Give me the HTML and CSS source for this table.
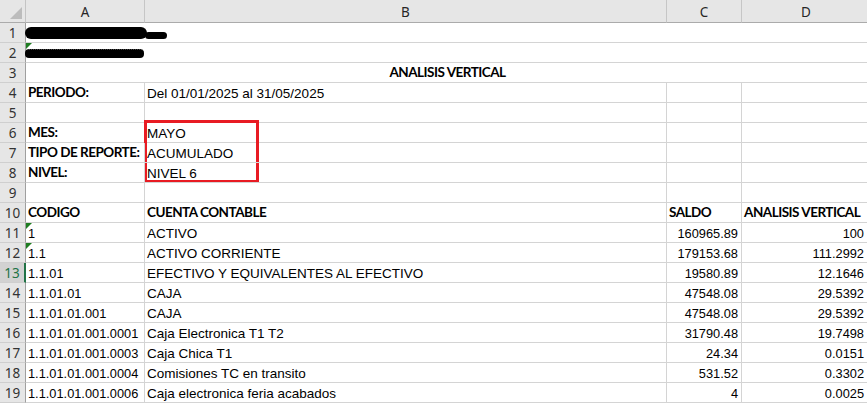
FILE: index.html
```html
<!DOCTYPE html>
<html lang="es">
<head>
<meta charset="utf-8">
<title>Analisis Vertical</title>
<link rel="stylesheet" href="styles.css">
</head>
<body>
<div class="sheet">
  <div class="corner"><span class="corner-tri"></span></div>
  <div class="ch">A</div>
  <div class="ch">B</div>
  <div class="ch">C</div>
  <div class="ch">D</div>

  <div class="rh">1</div>
  <div class="c span4 open"><span class="scrib scrib1"></span><span class="scrib scrib1t"></span></div>

  <div class="rh">2</div>
  <div class="c span4 open flag"><span class="scrib scrib2"></span></div>

  <div class="rh">3</div>
  <div class="c span4 b center">ANALISIS VERTICAL</div>

  <div class="rh">4</div>
  <div class="c b">PERIODO:</div>
  <div class="c">Del 01/01/2025 al 31/05/2025</div>
  <div class="c"></div>
  <div class="c"></div>

  <div class="rh">5</div>
  <div class="c"></div><div class="c"></div><div class="c"></div><div class="c"></div>

  <div class="rh">6</div>
  <div class="c b">MES:</div>
  <div class="c open">MAYO<span class="redbox"></span></div>
  <div class="c"></div><div class="c"></div>

  <div class="rh">7</div>
  <div class="c b">TIPO DE REPORTE:</div>
  <div class="c">ACUMULADO</div>
  <div class="c"></div><div class="c"></div>

  <div class="rh">8</div>
  <div class="c b">NIVEL:</div>
  <div class="c">NIVEL 6</div>
  <div class="c"></div><div class="c"></div>

  <div class="rh">9</div>
  <div class="c"></div><div class="c"></div><div class="c"></div><div class="c"></div>

  <div class="rh">10</div>
  <div class="c b">CODIGO</div>
  <div class="c b">CUENTA CONTABLE</div>
  <div class="c b">SALDO</div>
  <div class="c b">ANALISIS VERTICAL</div>

  <div class="rh">11</div>
  <div class="c code flag">1</div>
  <div class="c">ACTIVO</div>
  <div class="c num">160965.89</div>
  <div class="c num nd">100</div>

  <div class="rh">12</div>
  <div class="c code flag">1.1</div>
  <div class="c">ACTIVO CORRIENTE</div>
  <div class="c num">179153.68</div>
  <div class="c num nd">111.2992</div>

  <div class="rh rh-sel">13</div>
  <div class="c code">1.1.01</div>
  <div class="c">EFECTIVO Y EQUIVALENTES AL EFECTIVO</div>
  <div class="c num">19580.89</div>
  <div class="c num nd">12.1646</div>

  <div class="rh">14</div>
  <div class="c code">1.1.01.01</div>
  <div class="c">CAJA</div>
  <div class="c num">47548.08</div>
  <div class="c num nd">29.5392</div>

  <div class="rh">15</div>
  <div class="c code">1.1.01.01.001</div>
  <div class="c">CAJA</div>
  <div class="c num">47548.08</div>
  <div class="c num nd">29.5392</div>

  <div class="rh">16</div>
  <div class="c code">1.1.01.01.001.0001</div>
  <div class="c">Caja Electronica T1 T2</div>
  <div class="c num">31790.48</div>
  <div class="c num nd">19.7498</div>

  <div class="rh">17</div>
  <div class="c code">1.1.01.01.001.0003</div>
  <div class="c">Caja Chica T1</div>
  <div class="c num">24.34</div>
  <div class="c num nd">0.0151</div>

  <div class="rh">18</div>
  <div class="c code">1.1.01.01.001.0004</div>
  <div class="c">Comisiones TC en transito</div>
  <div class="c num">531.52</div>
  <div class="c num nd">0.3302</div>

  <div class="rh">19</div>
  <div class="c code">1.1.01.01.001.0006</div>
  <div class="c">Caja electronica feria acabados</div>
  <div class="c num">4</div>
  <div class="c num nd">0.0025</div>
</div>
</body>
</html>
```
FILE: styles.css
```css
html, body {
  margin: 0;
  padding: 0;
  background: #ffffff;
  overflow: hidden;
}

.sheet {
  display: grid;
  grid-template-columns: 26px 119px 522px 75px 129px;
  grid-template-rows: 23px repeat(19, 20px);
  width: 871px;
  font-family: "Liberation Sans", Arial, sans-serif;
  font-size: 13.5px;
  color: #000;
}

.corner {
  background: #e6e6e6;
  border-right: 1px solid #c4c4c4;
  border-bottom: 1px solid #ababab;
  display: flex;
  justify-content: flex-end;
  align-items: flex-end;
  padding: 0 3px 3px 0;
}

.corner-tri {
  width: 0;
  height: 0;
  border-left: 12px solid transparent;
  border-bottom: 12px solid #bcbcbc;
}

.ch {
  background: #e6e6e6;
  border-right: 1px solid #c6c6c6;
  border-bottom: 1px solid #ababab;
  display: flex;
  justify-content: center;
  align-items: center;
  font-family: "Noto Sans", "DejaVu Sans", sans-serif;
  font-size: 13.5px;
  color: #262626;
  padding-top: 2px;
}

.rh {
  background: #e6e6e6;
  border-right: 1px solid #9f9f9f;
  border-bottom: 1px solid #cfcfcf;
  display: flex;
  justify-content: center;
  align-items: center;
  font-family: "Noto Sans", "DejaVu Sans", sans-serif;
  font-size: 13.5px;
  color: #333;
  padding-top: 1px;
}

.rh-sel {
  background: #d2d2d2;
  color: #217346;
  border-right: 2px solid #217346;
}

.c {
  border-right: 1px solid #d4d4d4;
  border-bottom: 1px solid #d4d4d4;
  display: flex;
  align-items: flex-end;
  padding: 0 3px 0 2px;
  white-space: nowrap;
  line-height: 17px;
  position: relative;
  overflow: hidden;
}

.code,
.num {
  font-size: 12.8px;
}

.open {
  overflow: visible;
}

.span4 {
  grid-column: span 4;
}

.b {
  font-family: Lato, "Open Sans", sans-serif;
  font-weight: 700;
  font-size: 13.5px;
  letter-spacing: -0.5px;
  padding-bottom: 1px;
}

.center {
  justify-content: center;
}

.num {
  justify-content: flex-end;
}

.nd {
  padding-right: 6px;
}

.flag::before {
  content: "";
  position: absolute;
  left: 0;
  top: 0;
  width: 0;
  height: 0;
  border-top: 6px solid #1e7d22;
  border-right: 6px solid transparent;
}

.scrib {
  display: inline-block;
  background: #000;
  border-radius: 7px;
}

.scrib1 {
  width: 122px;
  height: 12px;
  margin-left: -3px;
  margin-bottom: 3px;
}

.scrib1t {
  width: 22px;
  height: 7px;
  margin-left: -2px;
  margin-bottom: 3px;
  border-radius: 4px;
}

.scrib2 {
  width: 119px;
  height: 8px;
  margin-left: -3px;
  margin-bottom: 4px;
  border-radius: 4px;
  border-top: 1px dotted #444;
}

.redbox {
  position: absolute;
  left: -1px;
  top: -3px;
  width: 115px;
  height: 63px;
  border: 3px solid #e81b23;
  box-sizing: border-box;
  pointer-events: none;
}
```
